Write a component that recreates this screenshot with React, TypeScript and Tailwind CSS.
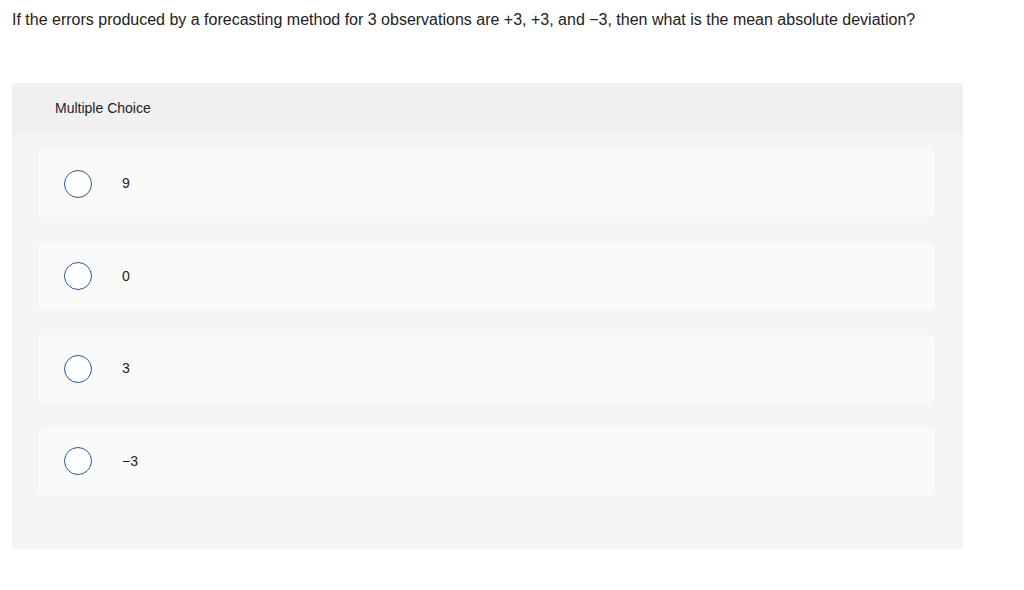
import React from 'react';

const App: React.FC = () => {
  const options = ['9', '0', '3', '−3'];

  return (
    <div className="w-[1024px] h-[590px] bg-white text-[#222] font-['Liberation_Sans',Arial,sans-serif]">
      <div className="pl-3 pt-[10px] text-[16px] leading-5">
        If the errors produced by a forecasting method for 3 observations are +3, +3, and −3, then what is the mean absolute deviation?
      </div>

      <div className="ml-3 mt-[53px] w-[951px] h-[467px] rounded-[4px] bg-[#f5f5f5] overflow-hidden">
        <div className="h-[51px] bg-[#f0f0f0] pl-[43px] flex items-center text-[14px] text-[#222]">
          Multiple Choice
        </div>

        <div className="pt-4 px-[26px] flex flex-col gap-[25.5px]">
          {options.map((o, i) => (
            <div key={i} className="h-[67px] w-[896px] rounded-[4px] bg-[#fafafa] flex items-center">
              <div className="ml-[26px] w-7 h-7 rounded-full border-[1.5px] border-[#2a5a95] bg-white" />
              <span className="ml-[30px] text-[14px] text-[#222]">{o}</span>
            </div>
          ))}
        </div>
      </div>
    </div>
  );
};

export default App;
